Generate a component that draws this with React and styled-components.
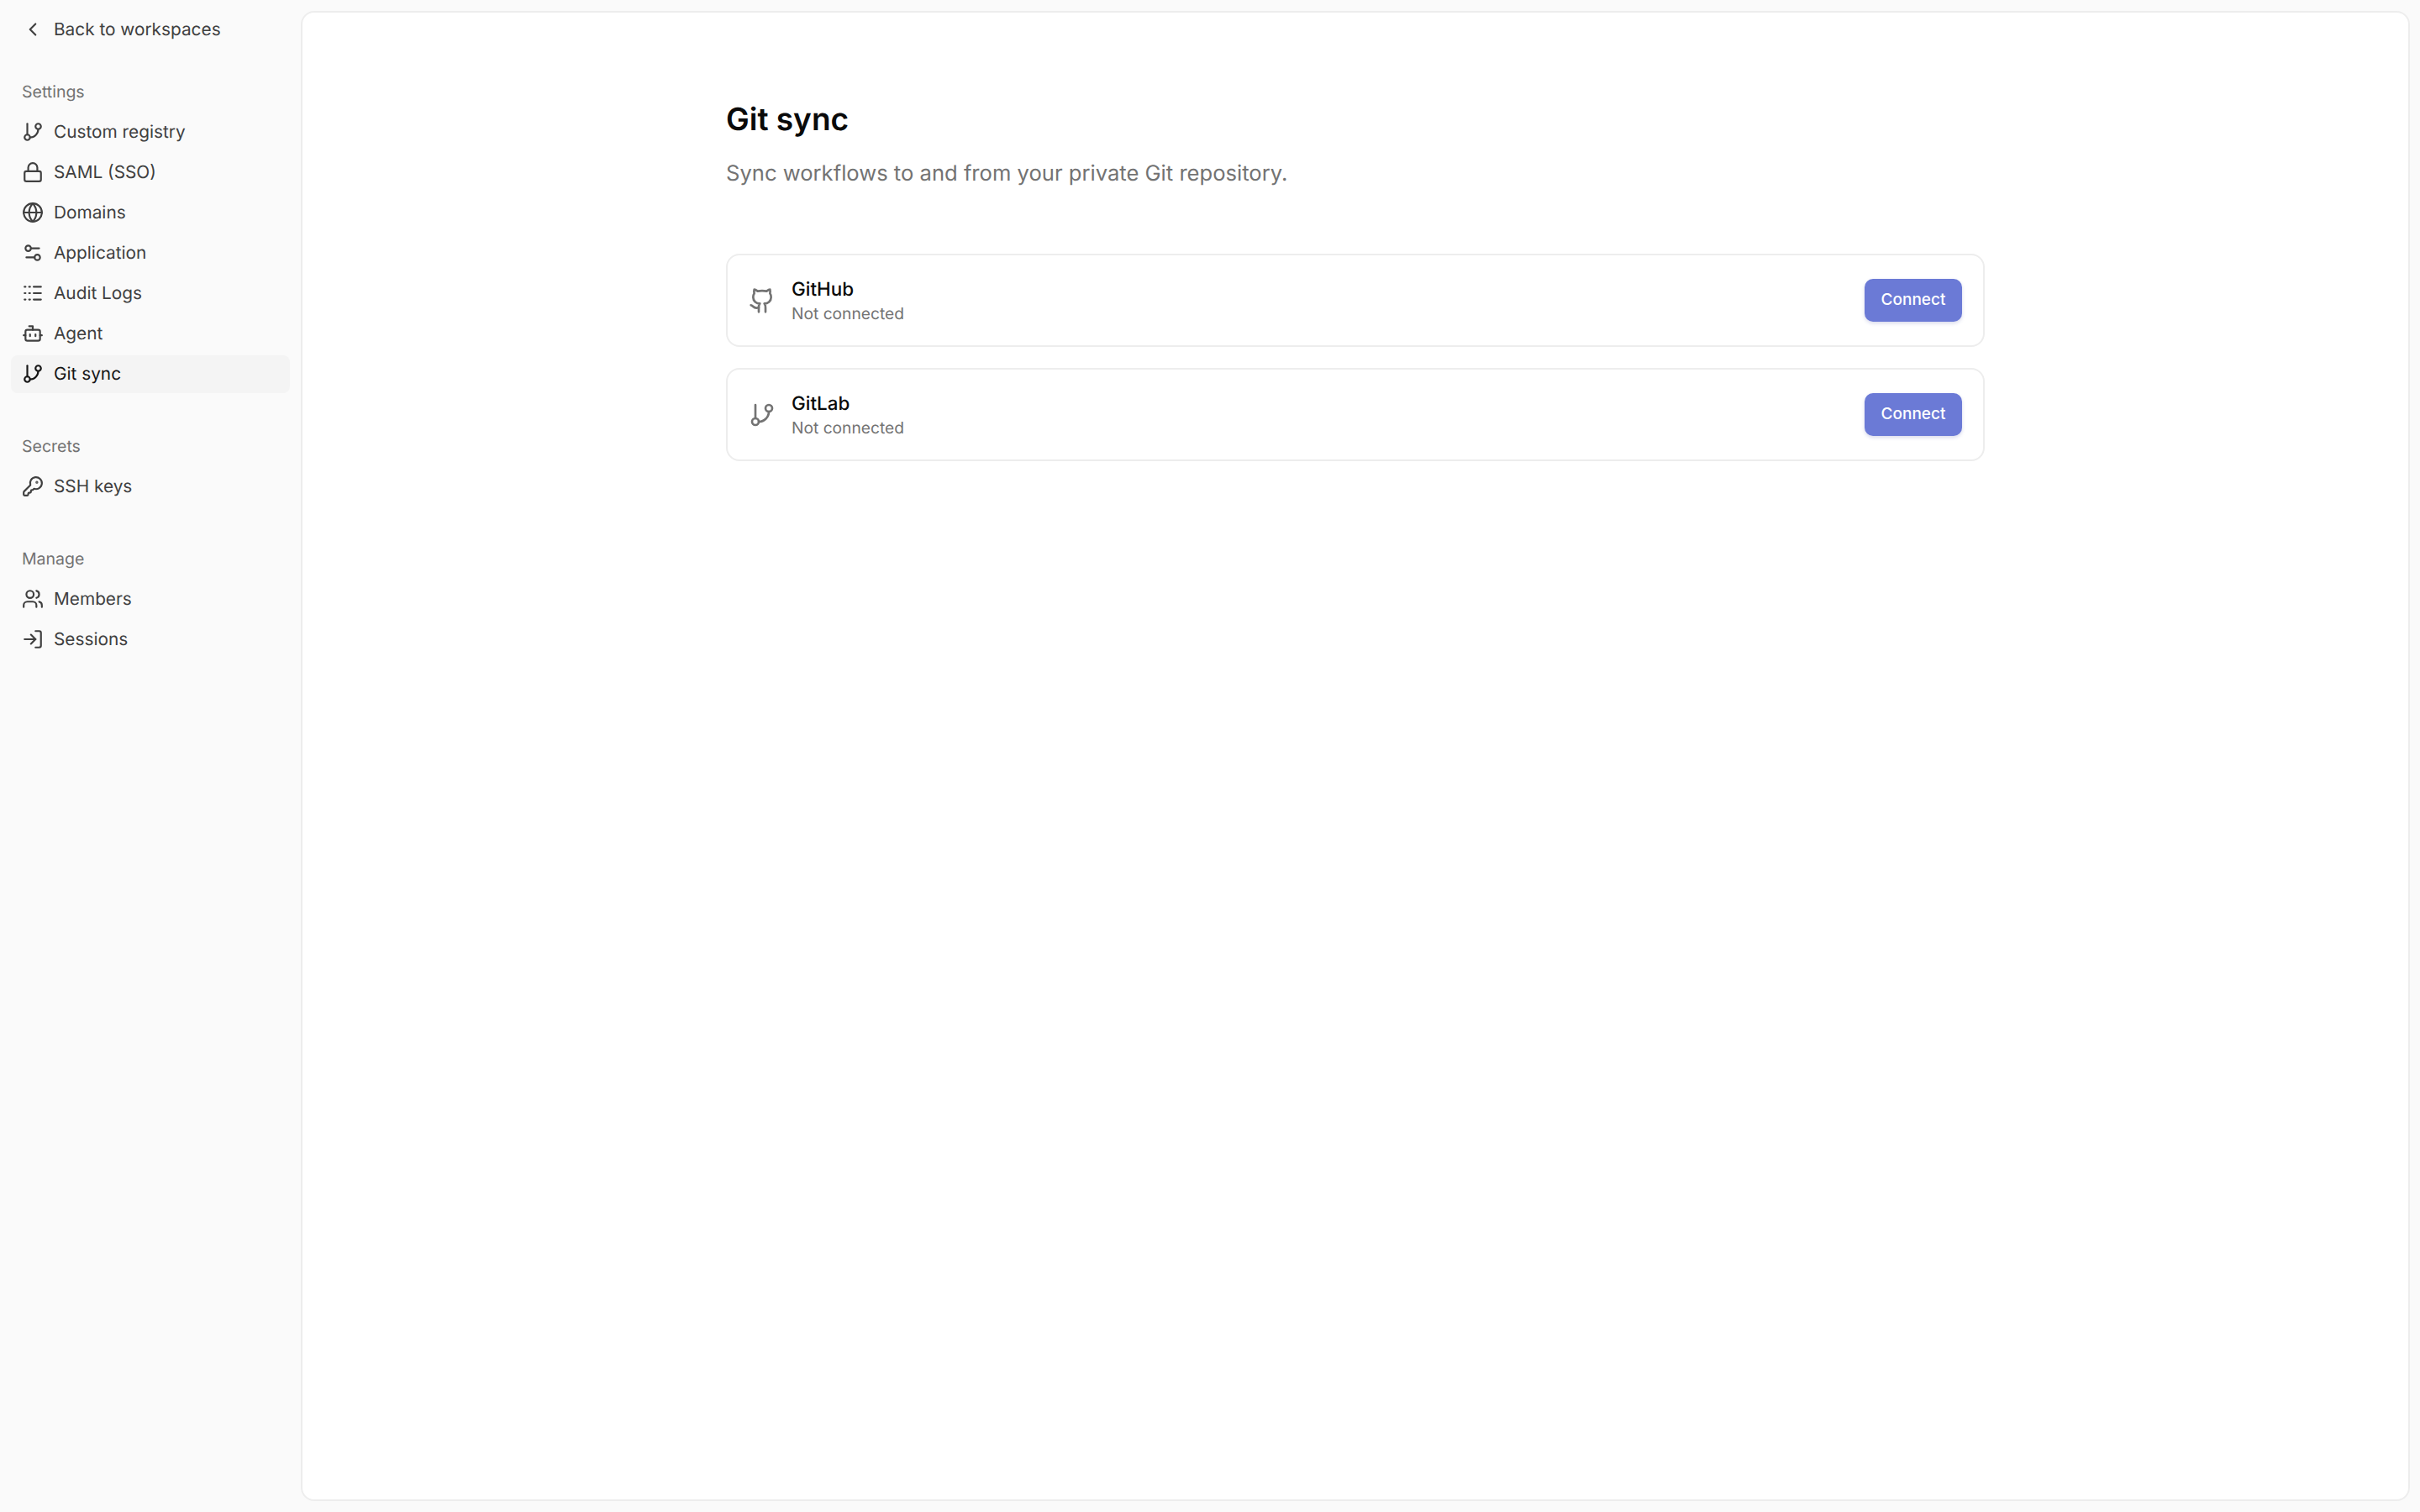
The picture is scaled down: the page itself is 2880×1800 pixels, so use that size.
import React from 'react';
import styled, { createGlobalStyle } from 'styled-components';
import {
    ChevronLeft,
    GitBranch,
    Lock,
    Globe,
    Settings2,
    Logs,
    Bot,
    KeyRound,
    Users,
    LogIn,
    Github,
} from 'lucide-react';

const GlobalStyle = createGlobalStyle`
    html, body {
        margin: 0;
        height: 100%;
        background: #fafafa;
    }
    #root {
        height: 100%;
    }
    * {
        box-sizing: border-box;
    }
`;

const groups = [
    {
        title: 'Settings',
        items: [
            { label: 'Custom registry', icon: GitBranch },
            { label: 'SAML (SSO)', icon: Lock },
            { label: 'Domains', icon: Globe },
            { label: 'Application', icon: Settings2 },
            { label: 'Audit Logs', icon: Logs },
            { label: 'Agent', icon: Bot },
            { label: 'Git sync', icon: GitBranch, active: true },
        ],
    },
    {
        title: 'Secrets',
        items: [{ label: 'SSH keys', icon: KeyRound }],
    },
    {
        title: 'Manage',
        items: [
            { label: 'Members', icon: Users },
            { label: 'Sessions', icon: LogIn },
        ],
    },
];

const providers = [
    { name: 'GitHub', icon: Github },
    { name: 'GitLab', icon: GitBranch },
];

function App() {
    return (
        <>
            <GlobalStyle />
            <Page>
                <Sidebar>
                    <NavItem>
                        <ChevronLeft size={26} />
                        Back to workspaces
                    </NavItem>
                    {groups.map((group) => (
                        <Group key={group.title}>
                            <GroupTitle>{group.title}</GroupTitle>
                            {group.items.map((item) => (
                                <NavItem key={item.label} $active={item.active}>
                                    <item.icon size={26} />
                                    {item.label}
                                </NavItem>
                            ))}
                        </Group>
                    ))}
                </Sidebar>
                <Main>
                    <Content>
                        <Title>Git sync</Title>
                        <Subtitle>Sync workflows to and from your private Git repository.</Subtitle>
                        <CardList>
                            {providers.map((provider) => (
                                <Card key={provider.name}>
                                    <ProviderIcon>
                                        <provider.icon size={32} />
                                    </ProviderIcon>
                                    <CardText>
                                        <CardName>{provider.name}</CardName>
                                        <CardStatus>Not connected</CardStatus>
                                    </CardText>
                                    <ConnectButton>Connect</ConnectButton>
                                </Card>
                            ))}
                        </CardList>
                    </Content>
                </Main>
            </Page>
        </>
    );
}

export default App;

// Styling
const Page = styled.div`
    display: flex;
    height: 1800px;
    font-family: 'Inter', 'Liberation Sans', sans-serif;
    text-rendering: geometricPrecision;
    background: #fafafa;
`;

const Sidebar = styled.nav`
    display: flex;
    flex-direction: column;
    flex: 0 0 358px;
    padding: 13px 13px 0 13px;
`;

const Group = styled.div`
    display: flex;
    flex-direction: column;
    gap: 3px;
    margin-top: 29px;

    & + & {
        margin-top: 41px;
    }
`;

const GroupTitle = styled.div`
    display: flex;
    align-items: center;
    height: 45px;
    padding: 0 0 2px 13px;
    font-size: 19.5px;
    font-weight: 400;
    color: #737373;
`;

const NavItem = styled.div`
    display: flex;
    align-items: center;
    gap: 12px;
    height: 45px;
    padding-left: 13px;
    border-radius: 8px;
    font-size: 20.8px;
    color: ${(props) => (props.$active ? '#171717' : '#404040')};
    background: ${(props) => (props.$active ? '#f4f4f4' : 'transparent')};

    svg {
        flex: none;
        margin-top: -1px;
    }
`;

const Main = styled.main`
    flex: 1;
    margin: 13px 12px 13px 0;
    background: #fff;
    border: 2px solid #ededed;
    border-radius: 16px;
`;

const Content = styled.div`
    width: 1498px;
    margin: 0 auto;
    padding-top: 100px;
`;

const Title = styled.h1`
    margin: 0;
    font-size: 37px;
    line-height: 54px;
    font-weight: 600;
    color: #0a0a0a;
`;

const Subtitle = styled.p`
    margin: 16px 0 0;
    font-size: 25.6px;
    line-height: 44px;
    color: #737373;
`;

const CardList = styled.div`
    display: flex;
    flex-direction: column;
    gap: 25px;
    margin-top: 73px;
`;

const Card = styled.div`
    display: flex;
    align-items: center;
    height: 111px;
    padding: 0 25px;
    border: 2px solid #ededed;
    border-radius: 16px;
`;

const ProviderIcon = styled.div`
    display: flex;
    margin-right: 19px;
    color: #737373;
`;

const CardText = styled.div`
    flex: 1;
    display: flex;
    flex-direction: column;
`;

const CardName = styled.div`
    font-size: 22.4px;
    line-height: 30px;
    font-weight: 500;
    color: #0a0a0a;
`;

const CardStatus = styled.div`
    font-size: 19.2px;
    line-height: 26px;
    color: #737373;
`;

const ConnectButton = styled.button`
    width: 116px;
    height: 51px;
    padding: 0 0 2px;
    border: none;
    border-radius: 10px;
    background: #6b7ad6;
    box-shadow: 0 2px 4px rgba(60, 70, 160, 0.2);
    font-family: inherit;
    font-size: 19px;
    font-weight: 500;
    color: #fff;
`;
